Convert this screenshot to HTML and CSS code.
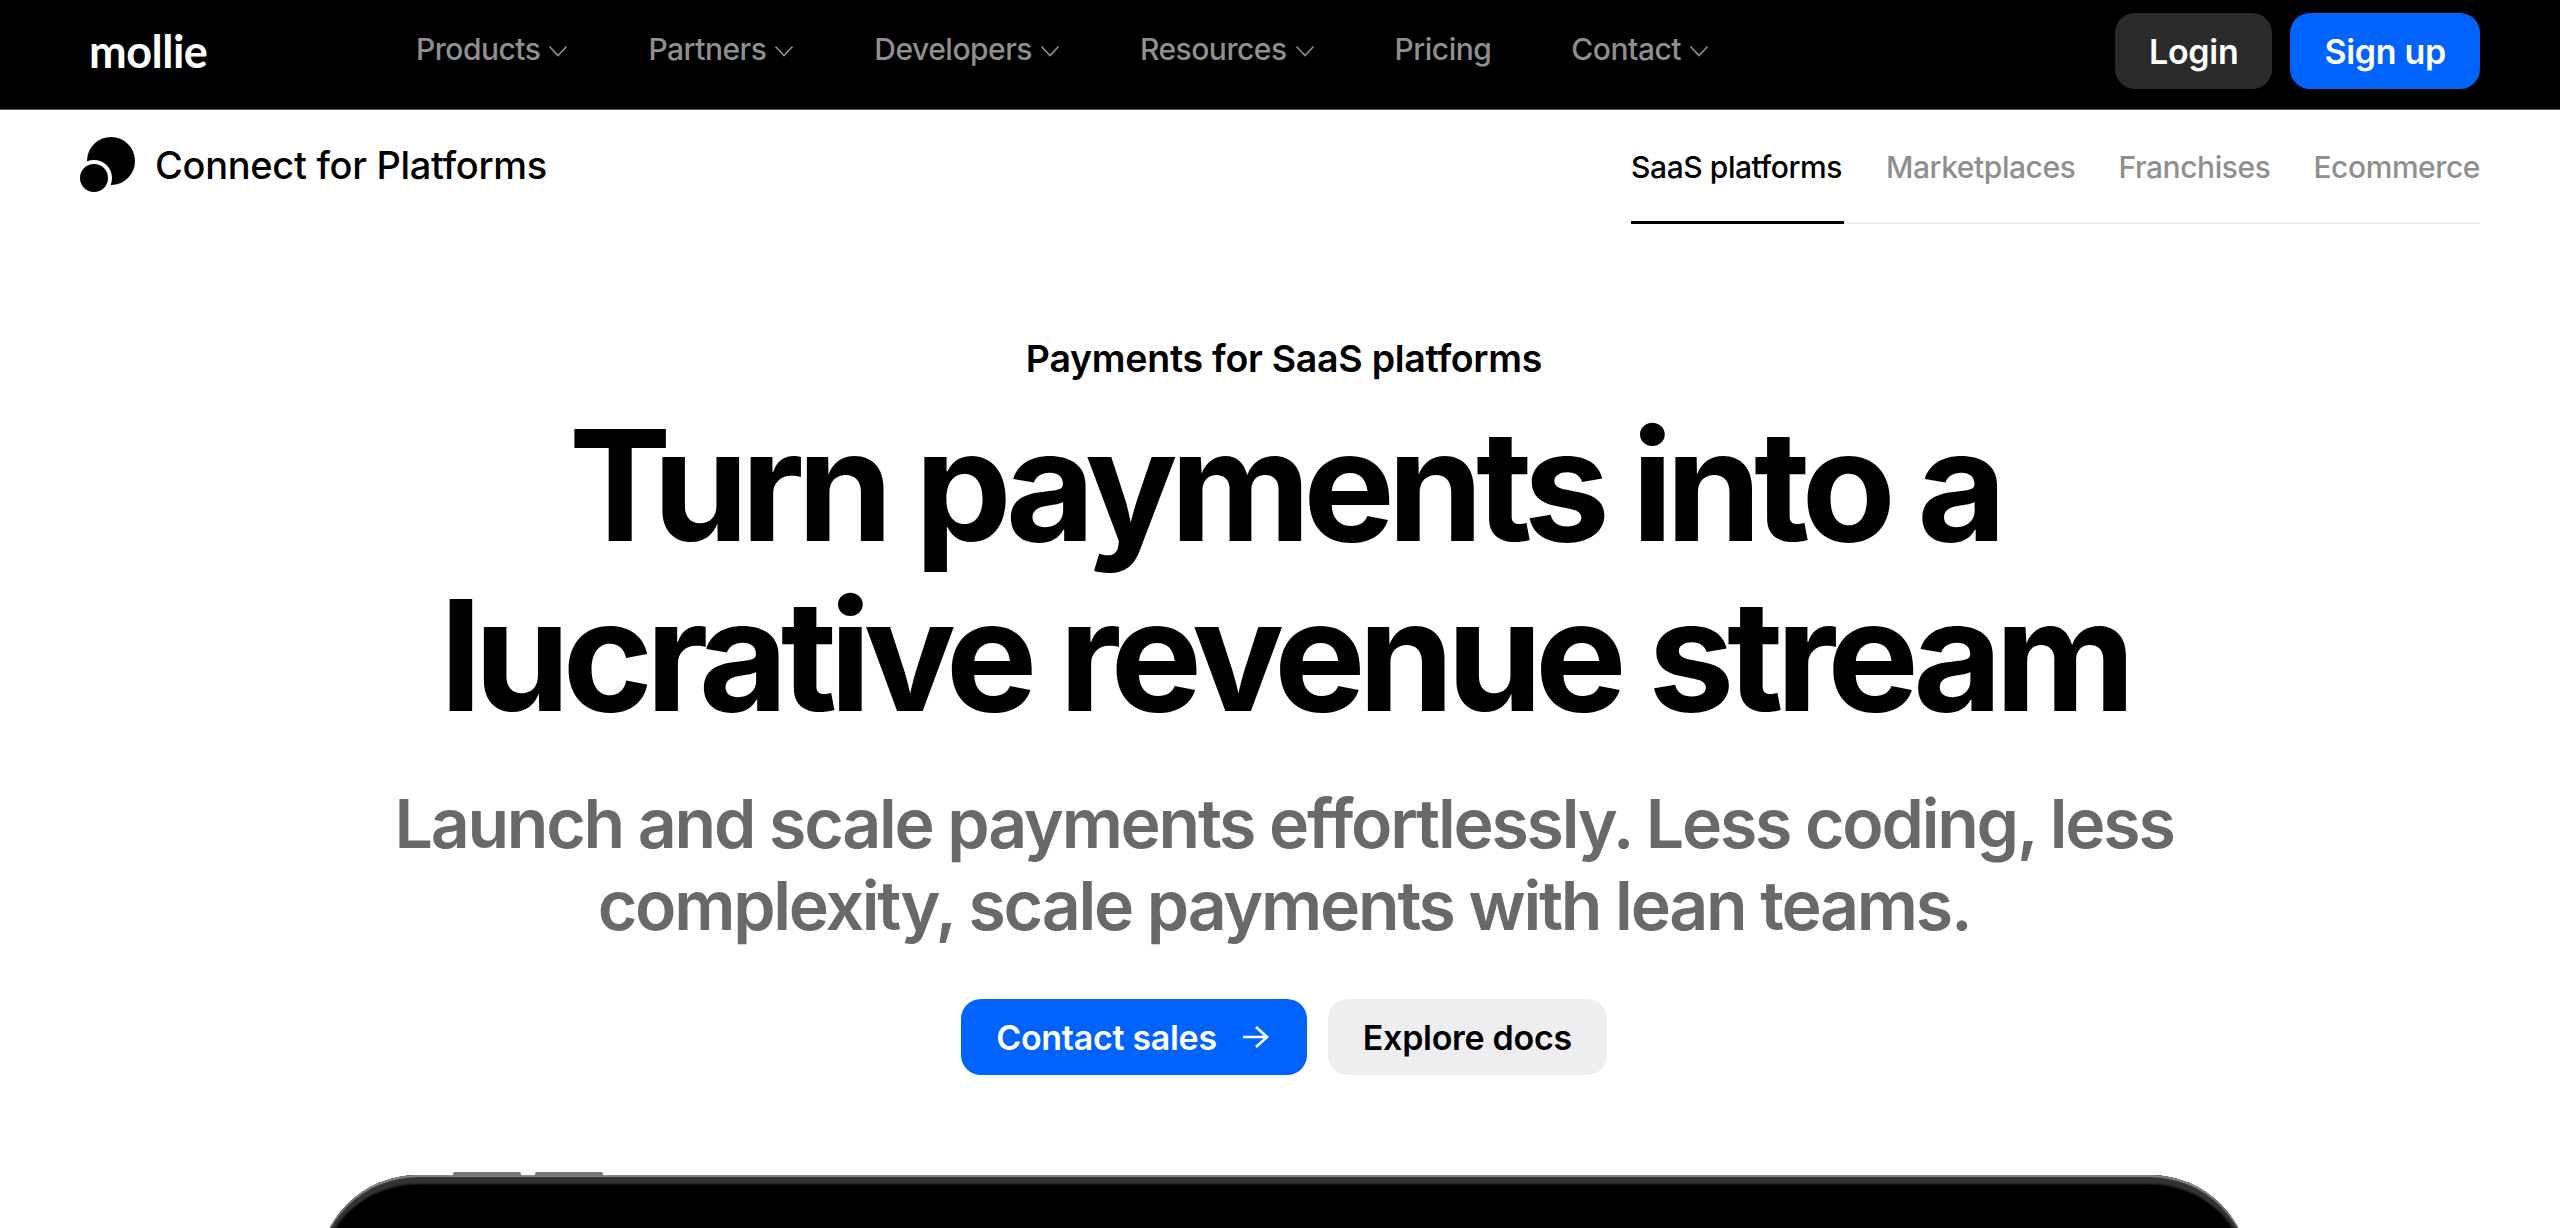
FILE: index.html
```html
<!DOCTYPE html>
<html lang="en">
<head>
<meta charset="utf-8">
<title>Connect for Platforms</title>
<link rel="stylesheet" href="styles.css">
</head>
<body>
<header class="topbar">
  <a class="logo">mollie</a>
  <nav class="mainnav">
    <a class="navlink">Products <svg class="chev" viewBox="0 0 20 12"><path d="M1.5 1.5 10 10.5 18.5 1.5"/></svg></a>
    <a class="navlink">Partners <svg class="chev" viewBox="0 0 20 12"><path d="M1.5 1.5 10 10.5 18.5 1.5"/></svg></a>
    <a class="navlink">Developers <svg class="chev" viewBox="0 0 20 12"><path d="M1.5 1.5 10 10.5 18.5 1.5"/></svg></a>
    <a class="navlink">Resources <svg class="chev" viewBox="0 0 20 12"><path d="M1.5 1.5 10 10.5 18.5 1.5"/></svg></a>
    <a class="navlink">Pricing</a>
    <a class="navlink">Contact <svg class="chev" viewBox="0 0 20 12"><path d="M1.5 1.5 10 10.5 18.5 1.5"/></svg></a>
  </nav>
  <div class="actions">
    <a class="btn btn-dark">Login</a>
    <a class="btn btn-blue">Sign up</a>
  </div>
</header>
<div class="subbar">
  <div class="brand">
    <svg class="brandmark" viewBox="0 0 56 56"><circle class="mark-big" cx="31" cy="24" r="24"/><circle class="mark-gap" cx="14" cy="41" r="18"/><circle class="mark-big" cx="14" cy="41" r="14"/></svg>
    <span class="brandname">Connect for Platforms</span>
  </div>
  <div class="tabs">
    <a class="tab tab-active">SaaS platforms</a>
    <a class="tab">Marketplaces</a>
    <a class="tab">Franchises</a>
    <a class="tab">Ecommerce</a>
  </div>
</div>
<main class="hero">
  <p class="eyebrow">Payments for SaaS platforms</p>
  <h1 class="title">Turn payments into a<br>lucrative revenue stream</h1>
  <p class="lead">Launch and scale payments effortlessly. Less coding, less<br>complexity, scale payments with lean teams.</p>
  <div class="cta">
    <a class="btn btn-blue btn-cta btn-arrow">Contact sales <svg class="arrow" viewBox="0 0 28 24"><path d="M2 12H26M15 2 26 12 15 22"/></svg></a>
    <a class="btn btn-light btn-cta">Explore docs</a>
  </div>
  <div class="phone-clip">
    <div class="phone">
      <span class="side side-a"></span>
      <span class="side side-b"></span>
    </div>
  </div>
</main>
</body>
</html>
```
FILE: styles.css
```css
* { box-sizing: border-box; }
html, body { margin: 0; height: 1228px; overflow: hidden; background: #fff; }
body { font-family: Inter, "Liberation Sans", sans-serif; color: #000; }

.topbar {
  height: 110px;
  background: #000;
  border-bottom: 1px solid #555;
  display: flex;
  align-items: center;
  padding: 0 80px 0 89px;
}
.logo { color: #fff; font-family: Lato, sans-serif; font-size: 45px; font-weight: 700; width: 327px; letter-spacing: -0.5px; line-height: 1; margin-bottom: 7px; }
.mainnav { display: flex; gap: 80px; flex: 1; align-items: center; margin-bottom: 11px; }
.navlink { color: #8f8f8f; font-size: 30px; font-weight: 500; letter-spacing: -0.5px; display: flex; align-items: center; gap: 8px; }
.chev { width: 20px; height: 12px; fill: none; stroke: #8f8f8f; stroke-width: 1.6; margin-top: 3px; }
.actions { display: flex; gap: 18px; margin-bottom: 7px; }

.btn {
  height: 76px;
  padding: 0 34px;
  border-radius: 20px;
  display: flex;
  align-items: center;
  font-size: 34px;
  font-weight: 600;
  letter-spacing: -0.3px;
}
.btn-dark { background: #2b2b2b; color: #fff; }
.btn-blue { background: #0062ff; color: #fff; }
.btn-light { background: #eeeef0; color: #000; }
.btn-cta { padding: 0 35px; }
.btn-arrow { padding-right: 38px; }

.subbar { display: flex; justify-content: space-between; padding: 0 80px; height: 115px; }
.brand { display: flex; align-items: center; gap: 19px; height: 110px; }
.brandmark { width: 56px; height: 56px; }
.mark-big { fill: #000; }
.mark-gap { fill: #fff; }
.brandname { font-size: 38px; font-weight: 500; letter-spacing: -0.3px; }
.tabs { display: flex; height: 115px; }
.tab { color: #8f8f8f; font-size: 30px; font-weight: 500; letter-spacing: -0.43px; padding: 0 0 0 43px; height: 114px; line-height: 114px; border-bottom: 2px solid #eee; }
.tab-active { color: #000; border-bottom: 3px solid #000; padding: 0 2px 0 0; }
.tab:nth-child(2) { padding-left: 42px; }

.hero { display: flex; flex-direction: column; align-items: center; padding-left: 8px; }
.eyebrow { margin: 112px 0 0; font-size: 37.5px; font-weight: 600; line-height: 44px; letter-spacing: -0.28px; }
.title { margin: 19px 0 0; font-size: 154px; line-height: 170px; font-weight: 700; letter-spacing: -7.5px; text-align: center; color: #000; }
.lead { margin: 42px 0 0; font-size: 68px; line-height: 82px; font-weight: 600; letter-spacing: -2.25px; text-align: center; color: #696969; }
.cta { display: flex; gap: 21px; margin-top: 53px; }
.arrow { width: 28px; height: 24px; fill: none; stroke: #fff; stroke-width: 2.6; margin-left: 24px; }

.phone-clip { margin-top: 97px; height: 56px; padding-top: 3px; overflow: hidden; }
.phone {
  position: relative;
  width: 1932px;
  height: 300px;
  background: #000;
  border-radius: 100px 100px 0 0;
  box-shadow: inset 0 2px 1px #8a8a8a, inset 0 9px 2px #333, inset 2px 0 1px #666, inset -2px 0 1px #666;
}
.side { position: absolute; top: -3px; height: 4px; width: 68px; background: #777; border-radius: 2px 2px 0 0; }
.side-a { left: 135px; }
.side-b { left: 217px; }
```
